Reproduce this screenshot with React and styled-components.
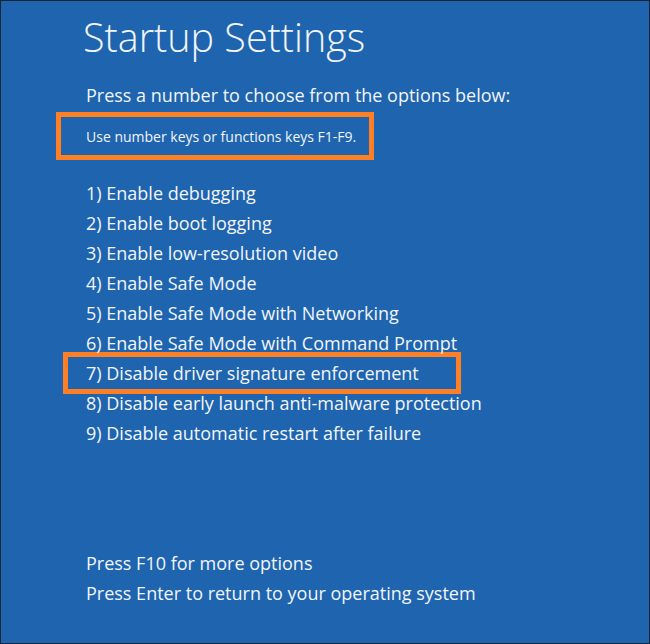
import React from "react";
import styled, { createGlobalStyle } from "styled-components";

const GlobalStyle = createGlobalStyle`
  html, body {
    margin: 0;
    padding: 0;
  }
`;

const Screen = styled.div`
  box-sizing: border-box;
  width: 650px;
  height: 644px;
  background-color: #1f64ae;
  border: 1px solid #1a2433;
  color: #f2f5fa;
  font-family: "Open Sans", "Noto Sans", sans-serif;
  display: flex;
  flex-direction: column;
  padding: 14px 0 0 85px;
`;

const Title = styled.h1`
  margin: 0;
  font-size: 39.5px;
  font-weight: 300;
  line-height: 44px;
  margin-left: -3px;
`;

const Subtitle = styled.div`
  margin-top: 21px;
  font-size: 18px;
  line-height: 30px;
`;

const Highlight = styled.div`
  box-sizing: border-box;
  border: 5px solid #ff7f27;
  width: ${(p) => p.width}px;
  margin-left: ${(p) => p.offset}px;
  padding-left: ${(p) => -p.offset - 5}px;
`;

const HintBox = styled(Highlight)`
  height: 48px;
  margin-top: 2px;
  display: flex;
  align-items: center;
`;

const Hint = styled.span`
  font-size: 14px;
`;

const List = styled.ol`
  list-style: none;
  margin: 18px 0 0;
  padding: 0;
`;

const Item = styled.li`
  font-size: 18px;
  line-height: 30px;
  white-space: nowrap;
`;

const ItemBox = styled(Highlight)`
  margin-top: -6px;
  margin-bottom: -6px;
  padding-top: 1px;
  padding-bottom: 1px;
`;

const Footer = styled.div`
  margin-top: 100px;
  font-size: 18px;
  line-height: 30px;
`;

const options = [
  "Enable debugging",
  "Enable boot logging",
  "Enable low-resolution video",
  "Enable Safe Mode",
  "Enable Safe Mode with Networking",
  "Enable Safe Mode with Command Prompt",
  "Disable driver signature enforcement",
  "Disable early launch anti-malware protection",
  "Disable automatic restart after failure",
];

export default function App() {
  return (
    <>
      <GlobalStyle />
      <Screen>
        <Title>Startup Settings</Title>
        <Subtitle>Press a number to choose from the options below:</Subtitle>
        <HintBox width={318} offset={-30}>
          <Hint>Use number keys or functions keys F1-F9.</Hint>
        </HintBox>
        <List>
          {options.map((text, i) =>
            i === 6 ? (
              <ItemBox as="li" key={text} width={398} offset={-23}>
                <Item as="span">
                  {i + 1}) {text}
                </Item>
              </ItemBox>
            ) : (
              <Item key={text}>
                {i + 1}) {text}
              </Item>
            )
          )}
        </List>
        <Footer>
          <div>Press F10 for more options</div>
          <div>Press Enter to return to your operating system</div>
        </Footer>
      </Screen>
    </>
  );
}
